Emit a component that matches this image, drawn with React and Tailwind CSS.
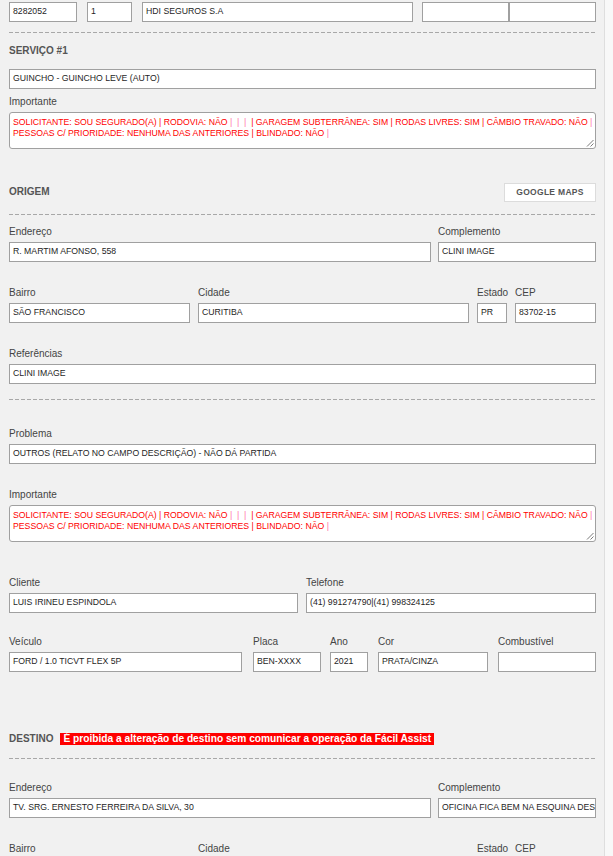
import React from 'react';

const Box = ({ className = '', children }) => (
  <div
    className={`h-[20px] shrink-0 bg-white border border-[#a0a0a0] px-[3px] flex items-center text-[8.7px] text-[#1e1e1e] whitespace-nowrap overflow-hidden ${className}`}
  >
    {children}
  </div>
);

const Field = ({ label, w, value }) => (
  <div className={`${w} shrink-0`}>
    <div className="h-[12px] leading-[12px] mb-[4px] text-[10px] text-[#444] whitespace-nowrap">{label}</div>
    <Box className="w-full">{value}</Box>
  </div>
);

const Dashed = ({ className = '' }) => (
  <div
    className={`h-px bg-[repeating-linear-gradient(to_right,#a8a8a8_0px,#a8a8a8_4px,transparent_4px,transparent_6px)] ${className}`}
  />
);

const Pipe = () => <span className="text-[#ff6fa8]">|</span>;

const Importante = ({ className = '' }) => (
  <div className={className}>
    <div className="h-[12px] leading-[12px] mb-[4px] text-[10px] text-[#444]">Importante</div>
    <div className="relative h-[37px] bg-white border border-[#a0a0a0] rounded-[3px] px-[3px] pt-[4px] text-[8.7px] leading-[11px] text-[#ff0000] whitespace-pre overflow-hidden">
      {'SOLICITANTE: SOU SEGURADO(A) | RODOVIA: NÃO '}
      <Pipe />
      {'  '}
      <Pipe />
      {'  '}
      <Pipe />
      {'  | GARAGEM SUBTERRÂNEA: SIM | RODAS LIVRES: SIM | CÂMBIO TRAVADO: NÃO '}
      <Pipe />
      <br />
      {'PESSOAS C/ PRIORIDADE: NENHUMA DAS ANTERIORES | BLINDADO: NÃO '}
      <Pipe />
      <svg className="absolute right-[1px] bottom-[1px]" width="8" height="8" viewBox="0 0 8 8">
        <line x1="7.5" y1="1" x2="1" y2="7.5" stroke="#7a7a7a" strokeWidth="1" />
        <line x1="7.5" y1="4.5" x2="4.5" y2="7.5" stroke="#7a7a7a" strokeWidth="1" />
      </svg>
    </div>
  </div>
);

const Heading = ({ children }) => (
  <span className="text-[10px] font-bold text-[#555] leading-[12px]">{children}</span>
);

export default function App() {
  return (
    <div className="min-h-screen bg-[#f8f8f8] font-['Liberation_Sans',Arial,sans-serif]">
      <div className="w-[605px] min-h-screen bg-[#f1f1f1] border-r border-[#dedede] pt-[2px] pl-[9px] pr-[8px] pb-10">
        {/* cabeçalho */}
        <div className="flex">
          <Box className="w-[68px]">8282052</Box>
          <Box className="w-[45px] ml-[10px]">1</Box>
          <Box className="w-[271px] ml-[10px]">HDI SEGUROS S.A</Box>
          <Box className="w-[87px] ml-[9px]" />
          <Box className="w-[87px]" />
        </div>

        <Dashed className="mt-[10px]" />

        <div className="h-[36px] flex items-center">
          <Heading>SERVIÇO #1</Heading>
        </div>
        <Box className="w-full">GUINCHO - GUINCHO LEVE (AUTO)</Box>

        <Importante className="mt-[7px]" />

        {/* origem */}
        <div className="mt-[33px] h-[20px] flex items-center justify-between">
          <Heading>ORIGEM</Heading>
          <button className="h-[19px] w-[92px] bg-white border border-[#dcdcdc] text-[8.5px] font-bold tracking-[0.3px] text-[#555]">
            GOOGLE MAPS
          </button>
        </div>

        <Dashed className="mt-[12px]" />

        <div className="mt-[11px] flex">
          <Field label="Endereço" w="w-[422px]" value="R. MARTIM AFONSO, 558" />
          <div className="ml-[7px]">
            <Field label="Complemento" w="w-[158px]" value="CLINI IMAGE" />
          </div>
        </div>

        <div className="mt-[25px] flex gap-[8px]">
          <Field label="Bairro" w="w-[181px]" value="SÃO FRANCISCO" />
          <Field label="Cidade" w="w-[271px]" value="CURITIBA" />
          <Field label="Estado" w="w-[30px]" value="PR" />
          <Field label="CEP" w="w-[81px]" value="83702-15" />
        </div>

        <div className="mt-[25px]">
          <Field label="Referências" w="w-full" value="CLINI IMAGE" />
        </div>

        <Dashed className="mt-[15px]" />

        <div className="mt-[28px]">
          <Field label="Problema" w="w-full" value="OUTROS (RELATO NO CAMPO DESCRIÇÃO) - NÃO DÁ PARTIDA" />
        </div>

        <Importante className="mt-[25px]" />

        <div className="mt-[35px] flex gap-[8px]">
          <Field label="Cliente" w="w-[289px]" value="LUIS IRINEU ESPINDOLA" />
          <Field label="Telefone" w="w-[290px]" value="(41) 991274790|(41) 998324125" />
        </div>

        <div className="mt-[23px] flex">
          <Field label="Veículo" w="w-[233px]" value="FORD / 1.0 TICVT FLEX 5P" />
          <div className="ml-[11px]">
            <Field label="Placa" w="w-[68px]" value="BEN-XXXX" />
          </div>
          <div className="ml-[9px]">
            <Field label="Ano" w="w-[38px]" value="2021" />
          </div>
          <div className="ml-[10px]">
            <Field label="Cor" w="w-[110px]" value="PRATA/CINZA" />
          </div>
          <div className="ml-[10px]">
            <Field label="Combustível" w="w-[98px]" value="" />
          </div>
        </div>

        {/* destino */}
        <div className="mt-[57px] h-[20px] flex items-center">
          <Heading>DESTINO</Heading>
          <span className="ml-[7px] h-[12px] bg-[#ff0000] px-[3px] text-[10.2px] leading-[12px] font-bold text-white whitespace-nowrap">
            É proibida a alteração de destino sem comunicar a operação da Fácil Assist
          </span>
        </div>

        <Dashed className="mt-[9px]" />

        <div className="mt-[23px] flex">
          <Field label="Endereço" w="w-[422px]" value="TV. SRG. ERNESTO FERREIRA DA SILVA, 30" />
          <div className="ml-[7px]">
            <Field label="Complemento" w="w-[158px]" value="OFICINA FICA BEM NA ESQUINA DES" />
          </div>
        </div>

        <div className="mt-[25px] flex gap-[8px]">
          <Field label="Bairro" w="w-[181px]" value="" />
          <Field label="Cidade" w="w-[271px]" value="" />
          <Field label="Estado" w="w-[30px]" value="" />
          <Field label="CEP" w="w-[81px]" value="" />
        </div>
      </div>
    </div>
  );
}
